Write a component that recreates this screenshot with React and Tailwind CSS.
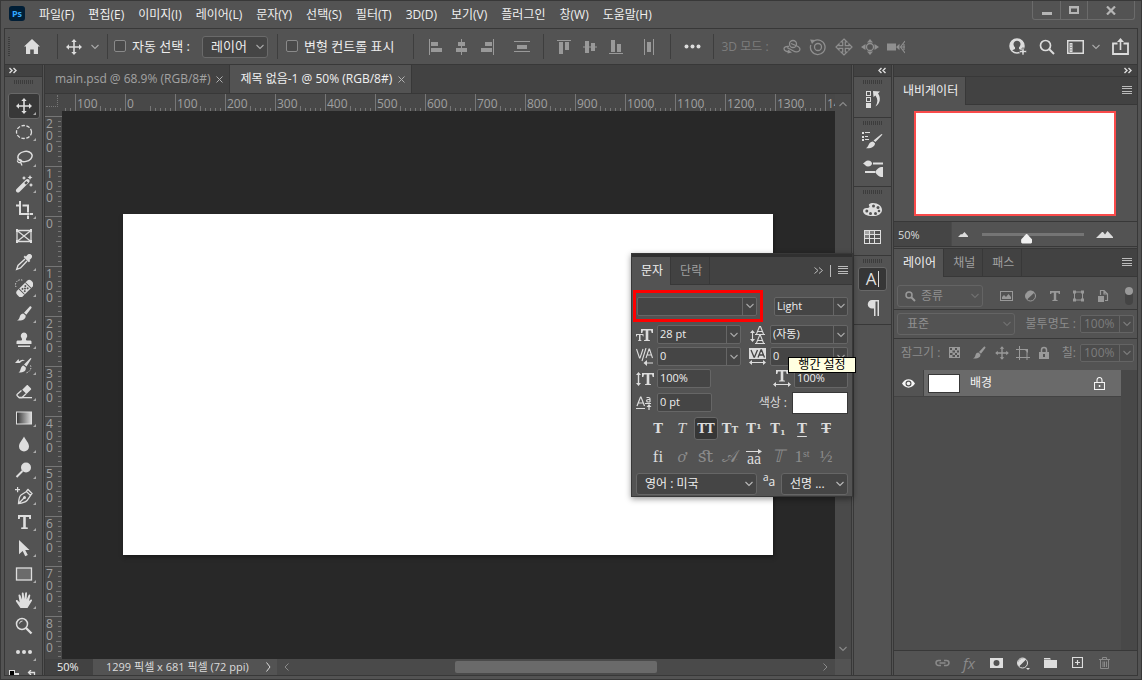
import React, { useState } from "react";

const menus = ["파일(F)", "편집(E)", "이미지(I)", "레이어(L)", "문자(Y)", "선택(S)", "필터(T)", "3D(D)", "보기(V)", "플러그인", "창(W)", "도움말(H)"];

const hRuler = ["100", "0", "100", "200", "300", "400", "500", "600", "700", "800", "900", "1000", "1100", "1200", "1300", "1400"];
const vRuler = ["200", "100", "0", "100", "200", "300", "400", "500", "600", "700", "800"];

const Svg = ({ w = 18, h = 18, children, className = "" }) => (
  <svg width={w} height={h} viewBox={`0 0 ${w} ${h}`} fill="currentColor" className={`shrink-0 ${className}`} aria-hidden="true">
    {children}
  </svg>
);

const Line = ({ d, sw = 1, ...rest }) => (
  <path d={d} fill="none" stroke="currentColor" strokeWidth={sw} {...rest} />
);

const Chevron = ({ className = "" }) => (
  <Svg w={8} h={6} className={className}>
    <Line d="M0.5 1l3.500 3.500L7.500 1" sw={1.100} />
  </Svg>
);

const DoubleArrow = ({ left }) => (
  <Svg w={8} h={7}>
    {left ? <Line d="M3.500 1L1 3.500 3.500 6M7.500 1L5 3.500 7.500 6" sw={1.400} /> : <Line d="M.5 1L3 3.500.5 6M4.500 1L7 3.500 4.500 6" sw={1.400} />}
  </Svg>
);

const MenuLines = () => (
  <Svg w={10} h={9}>
    <path d="M0 0h10v1H0zM0 2h10v1H0zM0 5h10v1H0zM0 7h10v1H0z" />
  </Svg>
);

const Grip = ({ className = "" }) => (
  <div className={`h-1 w-5 bg-[repeating-linear-gradient(90deg,#3c3c3c_0_1px,transparent_1px_2px)] ${className}`} />
);

const MoveIcon = () => (
  <Svg>
    <path d="M9 1l2.700 3H9.800v4.200H14V6.300l3 2.700-3 2.700V9.800H9.800V14h1.900L9 17l-2.700-3h1.900V9.800H4v1.900L1 9l3-2.700v1.900h4.200V4H6.300z" />
  </Svg>
);

const BrushIcon = () => (
  <Svg>
    <path d="M16 1.500c.8.500.8 1 .3 1.800l-5 6.500-2.300-2 5.500-6c.5-.5 1-.6 1.500-.3zM8.300 8.500l2.300 2c.5 3-2 5.500-8.600 5 2-1 2.300-2.500 3-4.500.6-1.600 1.800-2.400 3.300-2.500z" />
  </Svg>
);

const tools = [
  { name: "이동 도구", icon: <MoveIcon /> },
  { name: "원형 선택 윤곽 도구", icon: <Svg><ellipse cx="9" cy="9" rx="7.500" ry="6.500" fill="none" stroke="currentColor" strokeWidth="1.300" strokeDasharray="3.500 1.500" /></Svg> },
  {
    name: "올가미 도구",
    icon: (
      <Svg>
        <ellipse cx="10" cy="7.500" rx="7.200" ry="5" fill="none" stroke="currentColor" strokeWidth="1.500" transform="rotate(-12 10 7.500)" />
        <Line d="M2.500 11c2-1.500 5 .5 3.500 2-1.500 1.200-4 .3-3.500-1.500M5.500 13l1.500 3.500" sw={1.300} />
      </Svg>
    ),
  },
  {
    name: "자동 선택 도구",
    icon: (
      <Svg>
        <Line d="M3 15.500L12.500 6" sw={4} strokeLinecap="round" />
        <path d="M9.300 8l1.700 1.700L13 7.600 11.400 6z" fill="#535353" />
        <path d="M9 1l.8 1.200L11 3l-1.200.8L9 5l-.8-1.200L7 3l1.200-.8zM15 0l.8 1.700 1.700.8-1.700.8L15 5l-.8-1.700-1.700-.8 1.700-.8zM16 8l.8 1.200 1.200.8-1.200.8L16 12l-.8-1.200L14 10l1.200-.8z" />
      </Svg>
    ),
  },
  { name: "자르기 도구", icon: <Svg><path d="M4 0h2v12h8v2H4V5.500H1V3.500h3zM7.500 3.500H14v8h-2v-6H7.500zM12 14.500h2V18h-2zM14.500 12H18v2h-3.500z" /></Svg> },
  {
    name: "프레임 도구",
    icon: (
      <Svg>
        <Line d="M2 3.500h14v11H2zM2 3.500l14 11M16 3.500l-14 11" sw={1.300} />
        <path d="M1 2h2v3H1zM15 2h2v3h-2zM1 13h2v3H1zM15 13h2v3h-2z" />
      </Svg>
    ),
  },
  {
    name: "스포이드 도구",
    icon: (
      <Svg>
        <path d="M11.500 3c1.300-2 3-2.500 4.500-1.500s1.500 3-.3 4.500l-1.200 1 .8.900-1.500 1.300-5.200-5.200L9.900 2.600l.8.800z" />
        <Line d="M10 6L3 12.500 1.700 16.300 5.500 15 12 8" sw={1.400} />
      </Svg>
    ),
  },
  {
    name: "스팟 복구 브러시 도구",
    icon: (
      <Svg>
        <g transform="rotate(-45 10 9.500)">
          <rect x="0" y="5.500" width="20" height="8" rx="3" />
          <path d="M5 5.500h.9v8H5zM14 5.500h.9v8H14z" fill="#535353" />
          <g fill="#535353"><circle cx="8" cy="8" r="1" /><circle cx="12" cy="8" r="1" /><circle cx="10" cy="9.500" r="1" /><circle cx="8" cy="11.200" r="1" /><circle cx="12" cy="11.200" r="1" /></g>
        </g>
        <path d="M1 8A5 5 0 018 1.500" fill="none" stroke="currentColor" strokeDasharray="1.300 1.300" />
      </Svg>
    ),
  },
  { name: "브러시 도구", icon: <BrushIcon /> },
  { name: "복제 도장 도구", icon: <Svg><path d="M9 1.500a3.300 3.300 0 012.500 5.400c-.8 1-.8 2 .2 2.600H15c1 0 1.500.5 1.500 1.500v2h-15v-2c0-1 .5-1.500 1.500-1.500h3.300c1-.6 1-1.600.2-2.600A3.300 3.300 0 019 1.500zM3 14.500h12V16H3z" /></Svg> },
  {
    name: "작업 내역 브러시 도구",
    icon: (
      <Svg>
        <path d="M16.500 1.500L11.500 9.500 9 7.500 15.500 1zM8.500 8.500l2.300 2c.5 3-1.500 5-7.300 5 1.700-1 1.800-2.500 2.300-4 .4-1.600 1.500-2.800 2.700-3z" />
        <path d="M0 6l3.500-4 .6 2.300C6 2.500 8 2.300 10 3.500 7.500 3.500 6 4.500 5 6z" />
        <path d="M15.500 8.500c1.500 3-1 7-5 7.500" fill="none" stroke="currentColor" strokeDasharray="1.200 1.500" />
      </Svg>
    ),
  },
  {
    name: "지우개 도구",
    icon: (
      <Svg>
        <path d="M11.500 2.500c.6-.6 1-.6 1.600 0l2.700 2.700c.6.600.5 1 0 1.600L11.500 11 7.200 6.800z" />
        <Line d="M6.500 7.500l-4 3.500c-.8.700-.8 1.200 0 2l1.500 1.500h3l4-3.800" sw={1.300} />
        <path d="M4 14h13v1.300H4z" />
      </Svg>
    ),
  },
  {
    name: "그레이디언트 도구",
    icon: (
      <Svg>
        <defs><linearGradient id="toolGradient"><stop offset="0" stopColor="#333" /><stop offset="1" stopColor="#ddd" /></linearGradient></defs>
        <rect x="1.500" y="3" width="15" height="12" fill="url(#toolGradient)" stroke="currentColor" />
      </Svg>
    ),
  },
  { name: "흐림 효과 도구", icon: <Svg><path d="M9 1.500c2 4 5 6.500 5 10a5 5 0 01-10 0c0-3.500 3-6 5-10z" /></Svg> },
  { name: "닷지 도구", icon: <Svg><circle cx="11" cy="6.500" r="5" /><Line d="M7.500 10L1.500 16" sw={2} /></Svg> },
  {
    name: "펜 도구",
    icon: (
      <Svg>
        <Line d="M3.500 16.500c.3-4.500 1-7.500 2.500-8.500l5.500-3.500 4 4L12 13.500c-1.500 1.500-4 2.500-8.500 3zM4 16l5-5M11.500 4L13 2.500l4 4-1.500 1.800" sw={1.300} />
        <circle cx="9.500" cy="10.500" r="1.500" />
        <path d="M2 0h1.200v2H5v1.200H3.200v2H2v-2H0V2h2z" />
      </Svg>
    ),
  },
  { name: "수평 문자 도구", icon: <Svg><path d="M3 2h13v4h-1.800L14 4h-3.200v10.300l2 .3V16H6.200v-1.400l2-.3V4H5l-.2 2H3z" /></Svg> },
  { name: "패스 선택 도구", icon: <Svg><path d="M4 1l10.500 10h-4.300l2.600 5-2.600 1.200L7.700 12 4 15.200z" /></Svg> },
  { name: "사각형 도구", icon: <Svg><rect x="1.500" y="3" width="15" height="12" fill="#6b6b6b" stroke="currentColor" strokeWidth="1.300" /></Svg> },
  {
    name: "손 도구",
    icon: (
      <Svg>
        <path d="M5.500 17L1 10.500c-.6-1.200.8-1.900 1.700-1l2 2L3.500 4.600c-.1-1.300 1.500-1.500 1.900-.3L7 8.500l-.2-6c0-1.300 1.800-1.300 1.900 0L9.300 8l.9-6c.2-1.200 1.900-1 1.800.3L11.700 8.500l1.800-4.300c.5-1.100 2-.6 1.800.6L14 10l1.500-1.200c1-.7 2 .2 1.300 1.200L12.500 17z" />
      </Svg>
    ),
  },
  { name: "돋보기 도구", icon: <Svg><circle cx="7" cy="7" r="5.500" fill="none" stroke="currentColor" strokeWidth="1.500" /><Line d="M4.500 6.500A3 3 0 017.500 4" sw={1} /><Line d="M11 11l5.500 5.500" sw={2.300} /></Svg> },
  { name: "도구 모음 편집", icon: <Svg><circle cx="3" cy="9" r="2" /><circle cx="9" cy="9" r="2" /><circle cx="15" cy="9" r="2" /></Svg> },
];

const Divider = () => <div className="h-[25px] w-px shrink-0 bg-[#3e3e3e]" />;

const IconButton = ({ label, className = "", children }) => (
  <button type="button" aria-label={label} className={`flex shrink-0 items-center justify-center ${className}`}>
    {children}
  </button>
);

const CheckOption = ({ label }) => (
  <label className="flex shrink-0 items-center gap-1.5 text-[13px] text-[#ececec]">
    <input type="checkbox" className="size-3 appearance-none rounded-xs border border-[#8a8a8a] bg-[#4a4a4a]" />
    <span className="whitespace-nowrap">{label}</span>
  </label>
);

const Select = ({ label, value, className = "", textClass = "" }) => (
  <div className={`relative flex items-center rounded-[3px] border ${className}`}>
    <select aria-label={label} className={`h-full w-full appearance-none bg-transparent outline-none ${textClass}`}>
      <option>{value}</option>
    </select>
    <Chevron className="pointer-events-none absolute right-[3px]" />
  </div>
);

/* editable value with its drop-down button */
const Combo = ({ label, value, drop = true, className = "" }) => (
  <div className={`flex h-[19px] items-stretch rounded-xs border border-[#666] bg-[#454545] text-[#eee] ${className}`}>
    <input aria-label={label} defaultValue={value} className="w-0 min-w-0 flex-1 bg-transparent px-0.5 outline-none" />
    {drop && (
      <button type="button" aria-label={`${label} 목록`} className="flex w-[14px] items-center justify-center border-l border-[#666] text-[#aaa]">
        <Chevron />
      </button>
    )}
  </div>
);

const TitleBar = () => (
  <header className="flex h-[27px] shrink-0 items-start">
    <div className="mt-[5px] ml-2 flex h-[15px] w-4 items-center justify-center rounded-[3px] bg-[#001e36] text-[9px] font-bold text-[#31a8ff]">Ps</div>
    <nav className="ml-[14px] flex h-[27px] items-center gap-3.5 text-[#f0f0f0]">
      {menus.map((menu) => (
        <button key={menu} type="button" className="whitespace-nowrap">{menu}</button>
      ))}
    </nav>
    <div className="mr-1.5 ml-auto flex h-[19px] rounded-b-[3px] border border-t-0 border-[#6b6b6b] text-[#b5b5b5]">
      <IconButton label="최소화" className="w-7 border-r border-[#6b6b6b]"><Svg w={10} h={12}><path d="M0 8h10v3H0z" /></Svg></IconButton>
      <IconButton label="최대화" className="w-[27px] border-r border-[#6b6b6b]"><Svg w={10} h={8}><path fillRule="evenodd" d="M0 0h10v8H0zM2 2.500h6v3.500H2z" /></Svg></IconButton>
      <IconButton label="닫기" className="w-[46px]"><Svg w={10} h={9}><Line d="M1 .5l8 8M9 .5l-8 8" sw={2.200} /></Svg></IconButton>
    </div>
  </header>
);

const OptionsBar = () => (
  <div className="flex h-9 shrink-0 items-center border-b border-[#383838] text-[#dcdcdc]">
    <div className="ml-[3px] h-5 w-0.5 shrink-0 bg-[repeating-linear-gradient(180deg,#3c3c3c_0_1px,transparent_1px_2px)]" />
    <IconButton label="홈" className="mr-3 ml-3.5 w-4">
      <Svg w={16} h={15}><path d="M8 0l8 7.500h-2V15H9.800v-4.500H6.200V15H2V7.500H0z" /></Svg>
    </IconButton>
    <div className="ml-[5px]"><Divider /></div>
    <IconButton label="이동 도구" className="ml-[7px] gap-2"><MoveIcon /><Chevron className="text-[#aaa]" /></IconButton>
    <div className="mr-1.5 ml-2"><Divider /></div>
    <CheckOption label="자동 선택 :" />
    <Select label="자동 선택 대상" value="레이어" className="ml-3 h-[22px] w-[66px] shrink-0 border-[#6a6a6a] bg-[#454545] text-[13px] text-[#aaa]" textClass="pl-2 text-[#ececec]" />
    <div className="mr-2 ml-[9px]"><Divider /></div>
    <CheckOption label="변형 컨트롤 표시" />
    <div className="mr-[15px] ml-[18px]"><Divider /></div>
    <div className="flex shrink-0 items-center gap-3 text-[#999]">
      <IconButton label="왼쪽 가장자리 정렬"><Svg w={14} h={16}><path d="M0 0h1v16H0zM2 3h7v4H2zM2 9h11v4H2z" /></Svg></IconButton>
      <IconButton label="수평 중앙 정렬"><Svg w={13} h={16}><path d="M6 0h1v16H6zM3 3h7v4H3zM1 9h11v4H1z" /></Svg></IconButton>
      <IconButton label="오른쪽 가장자리 정렬"><Svg w={14} h={16}><path d="M13 0h1v16h-1zM5 3h7v4H5zM1 9h11v4H1z" /></Svg></IconButton>
      <IconButton label="수직 분포" className="ml-2"><Svg w={16} h={12}><path d="M0 0h16v1H0zM3 4h10v4H3zM0 10h16v1H0z" /></Svg></IconButton>
    </div>
    <div className="mx-[13px]"><Divider /></div>
    <div className="flex shrink-0 items-center gap-3 text-[#999]">
      <IconButton label="위쪽 가장자리 정렬"><Svg w={14} h={14}><path d="M0 0h14v1H0zM2 2h4v12H2zM8 2h4v8H8z" /></Svg></IconButton>
      <IconButton label="수직 가운데 정렬"><Svg w={14} h={14}><path d="M0 6.500h14v1H0zM2 1h4v12H2zM8 3h4v8H8z" /></Svg></IconButton>
      <IconButton label="아래쪽 가장자리 정렬"><Svg w={14} h={14}><path d="M0 13h14v1H0zM2 0h4v12H2zM8 4h4v8H8z" /></Svg></IconButton>
      <IconButton label="수평 분포" className="ml-2"><Svg w={12} h={16}><path d="M1 0h1v16H1zM4 3h4v10H4zM10 0h1v16h-1z" /></Svg></IconButton>
    </div>
    <div className="mr-[13px] ml-[15px]"><Divider /></div>
    <IconButton label="정렬 및 분포"><Svg w={17} h={5}><circle cx="2.500" cy="2.500" r="2" /><circle cx="8.500" cy="2.500" r="2" /><circle cx="14.500" cy="2.500" r="2" /></Svg></IconButton>
    <div className="mr-2 ml-3"><Divider /></div>
    <span className="shrink-0 whitespace-nowrap text-[#7d7d7d]">3D 모드 :</span>
    <div className="ml-3.5 flex shrink-0 items-center gap-2 text-[#8f8f8f]">
      <IconButton label="3D 회전">
        <Svg><Line d="M6 8.500c-3-.5-5 .5-5 2.300C1 13 4 14 7 13.500M8 5.500l6 2.500c2.500 1 3.500 3 2.500 4.500s-4 2-6 .5L4 9.500" sw={1.300} /><circle cx="10" cy="6" r="3.500" fill="none" stroke="currentColor" strokeWidth="1.300" /><path d="M5 11.500l4 3-4.500 1z" /></Svg>
      </IconButton>
      <IconButton label="3D 롤">
        <Svg><circle cx="9" cy="9" r="3.500" fill="none" stroke="currentColor" strokeWidth="1.300" /><Line d="M5 3a7.300 7.300 0 11-3.200 4" sw={1.300} /><path d="M1 1.500l5.500.5L3 6z" /></Svg>
      </IconButton>
      <IconButton label="3D 팬">
        <Svg><Line d="M9 1l3 3h-1.700v3.700H14V6l3 3-3 3v-1.700h-3.700V14H12l-3 3-3-3h1.700v-3.700H4V12L1 9l3-3v1.700h3.700V4H6z" sw={1.200} /></Svg>
      </IconButton>
      <IconButton label="3D 슬라이드">
        <Svg><circle cx="9" cy="9" r="3.500" fill="none" stroke="currentColor" strokeWidth="1.300" /><path d="M9 1l3 3.500H6zM9 17l3-3.500H6zM0 9l4.500-3v6zM18 9l-4.500-3v6z" /></Svg>
      </IconButton>
      <IconButton label="3D 카메라 확대">
        <Svg><path d="M0 5.500h9v7H0zM9 9l3.500-3.300v6.600z" /><Line d="M18 3l-4.500 6 4.500 6M17 6v6M14 9h4" sw={1.100} /></Svg>
      </IconButton>
    </div>
    <div className="mr-2 ml-auto flex shrink-0 items-center gap-3">
      <IconButton label="계정">
        <Svg>
          <path fillRule="evenodd" d="M8 1a7 7 0 015.300 11.500L10 11V9.300c.9-.8 1.500-2 1.500-3.300C11.500 4 10 2.700 8 2.700S4.500 4 4.500 6c0 1.300.6 2.500 1.500 3.300V11l-3.300 1.500A7 7 0 018 1z" />
          <circle cx="8" cy="8" r="7" fill="none" stroke="currentColor" strokeWidth="1.500" />
          <path d="M13 10h2v2.500h2.500v2H15V17h-2v-2.500h-2.500v-2H13z" stroke="#535353" strokeWidth=".6" />
        </Svg>
      </IconButton>
      <IconButton label="검색"><Svg w={16} h={16}><circle cx="6.500" cy="6.500" r="5" fill="none" stroke="currentColor" strokeWidth="1.700" /><Line d="M10 10l5 5" sw={2} /></Svg></IconButton>
      <IconButton label="작업 영역" className="gap-2">
        <Svg w={17} h={14}><Line d="M.75 .75h15.500v12.500H.75z" sw={1.500} /><path d="M2.500 3h3v9h-3z" /><path d="M3.500 4.500h1v1h-1zM3.500 7h1v1h-1zM3.500 9.500h1v1h-1z" fill="#535353" /></Svg>
        <Chevron className="text-[#aaa]" />
      </IconButton>
      <IconButton label="공유"><Svg w={17} h={17}><Line d="M5.500 5.500H1V16h15V5.500h-4.500" sw={1.800} /><path d="M8.500 0L12 4H9.300v8H7.700V4H5z" /></Svg></IconButton>
    </div>
  </div>
);

const Toolbar = () => {
  const [active, setActive] = useState(0);
  return (
    <aside className="flex w-[38px] shrink-0 flex-col overflow-hidden border-r border-[#383838] text-[#dedede]">
      <div className="flex h-3 shrink-0 items-center border-b border-[#383838] bg-[#424242] pl-1"><DoubleArrow /></div>
      <Grip className="mt-[3px] ml-[9px] shrink-0" />
      <div className="mt-[9px] ml-[3px] flex flex-col">
        {tools.map((tool, i) => (
          <button
            key={tool.name}
            type="button"
            aria-label={tool.name}
            onClick={() => setActive(i)}
            className={`relative flex h-[26px] w-8 shrink-0 items-center justify-center rounded-[3px] border ${active === i ? "border-[#686868] bg-[#383838]" : "border-transparent"}`}
          >
            {tool.icon}
            {i !== 5 && i !== 20 && <span className="absolute right-[3px] bottom-[3px] size-[3px] bg-[#aaa] [clip-path:polygon(100%_0,100%_100%,0_100%)]" />}
          </button>
        ))}
      </div>
      <div className="mt-[5px] flex shrink-0 gap-2 pl-1">
        <Svg w={10} h={10}><path d="M0 0h6v6H0z" fill="#ddd" /><path d="M1 1h4v4H1z" fill="#000" /><path d="M6 3h4v6H3V7h3z" /></Svg>
        <Svg w={9} h={10}><Line d="M1.500 2.500h6V8M4 0L1.500 2.500 4 5" sw={1.300} /></Svg>
      </div>
    </aside>
  );
};

const DocTab = ({ title, active }) => (
  <div className={`flex items-center gap-1.5 border-r border-[#383838] pr-1.5 pl-[10px] ${active ? "bg-[#535353] text-[#f0f0f0]" : "text-[#a3a3a3]"}`}>
    <button type="button" className="whitespace-nowrap">{title}</button>
    <button type="button" aria-label={`${title} 닫기`} className="text-[#b0b0b0]">
      <Svg w={7} h={7}><Line d="M.5 .5l6 6M6.500 .5l-6 6" /></Svg>
    </button>
  </div>
);

const HorizontalRuler = () => (
  <div className="flex h-[17px] min-w-0 flex-1 overflow-hidden">
    <div className="h-[3px] w-[13px] shrink-0 self-end bg-[repeating-linear-gradient(270deg,transparent_0_4px,#767676_4px_5px)]" />
    {hRuler.map((n, i) => (
      <div key={i} className="relative w-[50px] shrink-0 border-l border-[#767676] pl-px leading-[19px] text-[#a0a0a0]">
        <div className="absolute right-0 bottom-0 h-[3px] w-[29px] bg-[repeating-linear-gradient(270deg,transparent_0_4px,#767676_4px_5px)]" />
        <div className="absolute right-6 bottom-0 h-[5px] w-px bg-[#767676]" />
        {n}
      </div>
    ))}
  </div>
);

const VerticalRuler = () => (
  <div className="w-[17px] shrink-0 overflow-hidden bg-[#484848] pt-[5px]">
    {vRuler.map((n, i) => (
      <div key={i} className="relative flex h-[50px] flex-col border-t border-[#767676] pt-px pl-px text-[#a0a0a0]">
        <div className="absolute right-px bottom-0 h-[49px] w-[3px] bg-[repeating-linear-gradient(0deg,transparent_0_4px,#767676_4px_5px)]" />
        <div className="absolute right-px bottom-6 h-px w-[5px] bg-[#767676]" />
        {n.split("").map((digit, k) => (
          <span key={k} className="h-3 leading-3">{digit}</span>
        ))}
      </div>
    ))}
  </div>
);

const DocumentArea = () => (
  <main className="ml-px flex min-w-0 flex-1 flex-col border-x border-[#383838]">
    <div className="flex h-[29px] shrink-0 border-b border-[#383838] bg-[#424242]">
      <DocTab title="main.psd @ 68.9% (RGB/8#)" />
      <DocTab title="제목 없음-1 @ 50% (RGB/8#)" active />
    </div>
    <div className="flex min-h-0 flex-1">
      <div className="flex min-w-0 flex-1 flex-col">
        <div className="flex bg-[#484848]">
          <div className="flex w-[17px] shrink-0 items-end justify-end pr-1 pb-1">
            <div className="size-3 border-r border-b border-dotted border-[#767676]" />
          </div>
          <HorizontalRuler />
        </div>
        <div className="flex min-h-0 flex-1">
          <VerticalRuler />
          <div className="flex min-w-0 flex-1 items-center justify-center overflow-hidden bg-[#282828] pr-px pb-px">
            <div className="h-[341px] w-[650px] shrink-0 bg-white shadow-[1px_2px_4px_#1a1a1a]" />
          </div>
        </div>
      </div>
      <div className="flex w-4 shrink-0 flex-col items-center justify-between bg-[#4a4a4a] py-[7px] text-[#8a8a8a]">
        <button type="button" aria-label="위로 스크롤" className="rotate-180"><Chevron /></button>
        <button type="button" aria-label="아래로 스크롤"><Chevron /></button>
      </div>
    </div>
    <div className="flex h-4 shrink-0 bg-[#4a4a4a] text-[11px] leading-4">
      <div className="w-12 bg-[#424242] pl-3 text-[#f0f0f0]">50%</div>
      <div className="flex w-[184px] items-center justify-between bg-[#535353] pr-1.5 pl-[13px] whitespace-nowrap text-[#dcdcdc]">
        1299 픽셀 x 681 픽셀 (72 ppi)
        <Svg w={5} h={10}><Line d="M.5 .5L4 5 .5 9.500" /></Svg>
      </div>
      <div className="flex flex-1 items-center px-[7px] text-[#8a8a8a]">
        <button type="button" aria-label="왼쪽으로 스크롤"><Svg w={5} h={8}><Line d="M4.500 .5L1 4l3.500 3.500" /></Svg></button>
        <div className="flex flex-1 justify-center">
          <div className="h-3 w-[38%] rounded-xs bg-[#6a6a6a]" />
        </div>
        <button type="button" aria-label="오른쪽으로 스크롤"><Svg w={5} h={8}><Line d="M.5 .5L4 4 .5 7.500" /></Svg></button>
      </div>
      <div className="w-4 bg-[#535353]" />
    </div>
  </main>
);

const DockGroup = ({ className = "", children }) => (
  <div className={`flex flex-col items-center border-b border-[#383838] pt-[3px] ${className}`}>
    <Grip />
    {children}
  </div>
);

const Dock = () => (
  <aside className="ml-px flex w-[39px] shrink-0 flex-col border-x border-[#383838] text-[#dedede]">
    <div className="flex h-3 shrink-0 items-center justify-end border-b border-[#383838] bg-[#424242] pr-[5px]"><DoubleArrow left /></div>
    <DockGroup className="pb-1">
      <IconButton label="작업 내역" className="h-[29px] w-7">
        <Svg>
          <path fillRule="evenodd" d="M2 1h5v5H2zM3 2v3h3V2zM2 7h5v5H2zM3 8v3h3V8zM2 13h5v5H2z" />
          <path d="M9 1l7 .5-2 2c3 4 2.500 10-2.500 13 2.500-4 2.500-7.500 0-11L9.500 7z" />
        </Svg>
      </IconButton>
    </DockGroup>
    <DockGroup className="pb-1">
      <IconButton label="브러시 설정" className="h-[29px] w-7">
        <Svg w={21} h={18}>
          <path d="M0 1h2v2H0zM3 1h5v1H3zM0 5h2v2H0zM3 5h3v1H3zM0 8h2v2H0zM3 8h4v1H3zM20.500 3.500l-7 7.500-2-1.500L19.500 3zM11 10.500l2 1.700c0 3-3 5.300-9 5 2-1 2-2.500 3-4.200.8-1.500 2.300-2.500 4-2.500z" />
        </Svg>
      </IconButton>
      <IconButton label="브러시" className="h-7 w-7">
        <Svg w={20} h={18}>
          <path d="M0 4.500C2 3 3 1.500 5 1.500c2.500 0 4 1.500 4 3s-1.500 3-4 3S2.500 5.500 0 4.500zM10 3.500h10v2H10zM2 12h10v2H2zM12 13c2-3 4-4.500 6-5h2v10h-2c-2-.5-4-2-6-5z" />
        </Svg>
      </IconButton>
    </DockGroup>
    <DockGroup className="pb-1">
      <IconButton label="색상" className="h-[29px] w-7">
        <Svg w={19} h={18}>
          <path d="M10 3c5 0 9 3 9 7 0 3-3 5.500-7 6H9c-5 0-9-2-9-5 0-2 1.500-3 3.500-3 1.500 0 3-.3 3-1.200C6.500 5.500 5 5 6.500 4c1-.7 2-1 3.500-1z" />
          <g fill="#535353"><circle cx="10.500" cy="6" r="1.500" /><circle cx="15" cy="7.500" r="1.500" /><circle cx="16" cy="11" r="1.300" /><circle cx="12.500" cy="13.500" r="1.500" /><circle cx="7.500" cy="13.500" r="1.500" /><circle cx="3.800" cy="11" r="1.500" /></g>
        </Svg>
      </IconButton>
      <IconButton label="색상 견본" className="h-7 w-7">
        <Svg w={17} h={14}>
          <path fillRule="evenodd" d="M0 0h17v14H0zM1 1v3h4V1zM6 1v3h4V1zM11 1v3h5V1zM1 5v3h4V5zM6 5v3h4V5zM11 5v3h5V5zM1 9v4h4V9zM6 9v4h4V9zM11 9v4h5V9z" />
          <path d="M1 1h4v3H1z" opacity=".6" /><path d="M6 1h4v3H6zM1 5h4v3H1z" opacity=".3" />
        </Svg>
      </IconButton>
    </DockGroup>
    <DockGroup>
      <IconButton label="문자" className="mt-1 h-6 w-[29px] rounded-[3px] border border-[#686868] bg-[#363636]">
        <span className="text-[17px] leading-5">A</span><span className="ml-0.5 h-4 w-px bg-current" />
      </IconButton>
      <IconButton label="단락" className="h-[33px] w-7">
        <Svg w={12} h={16}><path d="M5 0h7v16h-1.500V1.500H8.500V16H7V8.500H5A4.200 4.200 0 015 0z" /></Svg>
      </IconButton>
    </DockGroup>
  </aside>
);

const PanelTab = ({ active, children }) => (
  <button type="button" className={`border-r border-[#383838] pr-[7px] pl-[9px] ${active ? "-mb-px bg-[#535353] pb-px text-[#f0f0f0]" : "text-[#a0a0a0]"}`}>
    {children}
  </button>
);

const PanelTabs = ({ children }) => (
  <div className="flex h-7 shrink-0 border-b border-[#383838] bg-[#424242]">
    {children}
    <button type="button" aria-label="패널 메뉴" className="mr-[5px] ml-auto text-[#bbb]"><MenuLines /></button>
  </div>
);

const Navigator = () => {
  const [zoom, setZoom] = useState(43);
  return (
    <section className="flex flex-col border-b border-[#383838]">
      <PanelTabs><PanelTab active>내비게이터</PanelTab></PanelTabs>
      <div className="flex h-[116px] justify-center pt-1.5 pr-px">
        <div className="h-[105px] w-[202px] border-2 border-[#f94b4b] bg-white" />
      </div>
      <div className="flex h-[25px] items-center border-t border-[#383838] text-[#dcdcdc]">
        <input aria-label="확대/축소 비율" defaultValue="50%" className="h-full w-[58px] border-r border-[#4a4a4a] bg-[#454545] pl-1 text-[11px] outline-none" />
        <Svg w={10} h={5} className="ml-1.5"><path d="M0 5l3-3 1 .5L6.500 0 10 4v1z" /></Svg>
        <input
          type="range"
          aria-label="확대/축소"
          value={zoom}
          onChange={(e) => setZoom(e.target.value)}
          className="mr-3 ml-3.5 h-4 min-w-0 flex-1 appearance-none bg-transparent [&::-webkit-slider-runnable-track]:h-[3px] [&::-webkit-slider-runnable-track]:bg-[#757575] [&::-webkit-slider-thumb]:mt-px [&::-webkit-slider-thumb]:h-[10px] [&::-webkit-slider-thumb]:w-[11px] [&::-webkit-slider-thumb]:appearance-none [&::-webkit-slider-thumb]:bg-[#f0f0f0] [&::-webkit-slider-thumb]:[clip-path:polygon(50%_0,100%_60%,100%_90%,90%_100%,10%_100%,0_90%,0_60%)]"
        />
        <Svg w={17} h={7} className="mr-6"><path d="M0 7l6-6h1l2 2.500L11.500 0l5.500 6v1z" /></Svg>
      </div>
    </section>
  );
};

const PercentField = ({ id, label }) => (
  <>
    <label htmlFor={id} className="ml-auto whitespace-nowrap">{label}</label>
    <div className="ml-1 flex h-[18px] rounded-xs border border-[#646464] bg-[#4c4c4c] text-[#7c7c7c]">
      <input id={id} defaultValue="100%" className="w-[38px] bg-transparent pl-[3px] outline-none" />
      <button type="button" aria-label={`${label} 조절`} className="flex w-[14px] items-center justify-center border-l border-[#646464]"><Chevron /></button>
    </div>
  </>
);

const Layers = () => (
  <section className="mt-px flex min-h-0 flex-1 flex-col border-t border-[#383838]">
    <PanelTabs>
      <PanelTab active>레이어</PanelTab>
      <PanelTab>채널</PanelTab>
      <PanelTab>패스</PanelTab>
    </PanelTabs>
    <div className="flex h-[33px] shrink-0 items-center border-b border-[#383838] px-[3px] pt-1.5 text-[#999]">
      <div className="relative flex items-center">
        <Svg w={11} h={11} className="pointer-events-none absolute left-2"><circle cx="4" cy="4" r="3" fill="none" stroke="currentColor" strokeWidth="1.500" /><Line d="M6 6l4 4" sw={2} /></Svg>
        <Select label="필터 종류" value="종류" className="h-[22px] w-[86px] border-[#646464] text-[#707070]" textClass="pl-[23px] text-[#909090]" />
      </div>
      <div className="ml-[17px] flex items-center gap-[11px]">
        <IconButton label="픽셀 레이어 필터"><Svg w={13} h={12}><path fillRule="evenodd" d="M0 1h13v10H0zM1 2v8h11V2z" /><path d="M2 9V7l2-2 2 2 2.500-3L11 7v2z" /></Svg></IconButton>
        <IconButton label="조정 레이어 필터"><Svg w={13} h={12}><circle cx="6.500" cy="6" r="5" fill="none" stroke="currentColor" /><path d="M10.500 2.500L3 9.500A5 5 0 0110.500 2.500z" /></Svg></IconButton>
        <IconButton label="문자 레이어 필터"><Svg w={13} h={12}><path d="M2 1h10v3h-1.200l-.5-1.300H8.200v7l1.500.5v.8H4.300v-.8l1.500-.5v-7H3.700L3.200 4H2z" /></Svg></IconButton>
        <IconButton label="모양 레이어 필터"><Svg w={13} h={12}><Line d="M2.500 2h8v8h-8z" /><path d="M1 .5h3v3H1zM9 .5h3v3H9zM1 8.500h3v3H1zM9 8.500h3v3H9z" /></Svg></IconButton>
        <IconButton label="고급 개체 필터"><Svg w={13} h={12}><path d="M2 6h6v6H2z" /><Line d="M4.500 5V.5H8L11.500 4v6.500H9M8 .5V4h3.500" sw={1.200} /></Svg></IconButton>
      </div>
      <button type="button" aria-label="필터 켜기" className="mr-px ml-auto flex h-[18px] w-2 justify-center rounded-full bg-[#444]"><span className="size-2 rounded-full bg-[#999]" /></button>
    </div>
    <div className="flex h-[29px] shrink-0 items-center border-b border-[#383838] px-[3px] text-[#8c8c8c]">
      <Select label="혼합 모드" value="표준" className="h-[22px] w-[118px] border-[#646464] text-[#707070]" textClass="pl-[9px] text-[#909090]" />
      <PercentField id="opacity" label="불투명도 :" />
    </div>
    <div className="flex h-[31px] shrink-0 items-center px-[3px] pb-1 text-[#8c8c8c]">
      <span className="ml-1 whitespace-nowrap">잠그기 :</span>
      <div className="ml-2 flex items-center gap-[9px] text-[#9a9a9a]">
        <IconButton label="투명 픽셀 잠그기"><Svg w={13} h={14}><path fillRule="evenodd" d="M1 1h11v11H1zM2 2v2h2V2zM7 2v2h2V2zM4.500 4.500v2H7v-2zM9 4.500v2h2v-2zM2 7v2h2.500V7zM7 7v2h2V7zM4.500 9v2H7V9zM9 9v2h2V9z" /></Svg></IconButton>
        <IconButton label="이미지 픽셀 잠그기" className="-mr-1"><span className="block scale-85"><BrushIcon /></span></IconButton>
        <IconButton label="위치 잠그기" className="-mr-1"><span className="block scale-85"><MoveIcon /></span></IconButton>
        <IconButton label="아트보드 잠그기"><Svg w={14} h={14}><Line d="M3.500 0v14M0 3.500h10l1 1V14M0 11.500h14" /><path d="M8 3l4 4V3z" /></Svg></IconButton>
        <IconButton label="모두 잠그기"><Svg w={10} h={14}><path d="M0 6h10v7H0z" /><Line d="M2.500 6V4a2.500 2.500 0 015 0v2" sw={1.500} /><path d="M4 8h2v3H4z" fill="#535353" /></Svg></IconButton>
      </div>
      <PercentField id="fill" label="칠:" />
    </div>
    <div className="flex min-h-0 flex-1 bg-[#4d4d4d]">
      <div className="flex-1">
        <div className="flex h-[27px] items-stretch border-b border-[#434343] bg-[#6a6a6a] text-[#f4f4f4]">
          <IconButton label="레이어 표시" className="w-[30px] border-r border-[#434343] bg-[#535353]">
            <Svg w={13} h={9}><path fillRule="evenodd" d="M0 4.500C3-1.300 10-1.300 13 4.500 10 10 3 10 0 4.500zM6.500 1.500a3 3 0 100 6 3 3 0 000-6z" /><circle cx="6.500" cy="4.500" r="1.800" /></Svg>
          </IconButton>
          <div className="m-1 h-[19px] w-8 border border-[#383838] bg-white" />
          <button type="button" className="ml-1.5 flex-1 text-left">배경</button>
          <IconButton label="레이어 잠김" className="mr-4"><Svg w={11} h={13}><Line d="M.5 5.500h10v7H.5zM3 5.500V3a2.500 2.500 0 015 0v2.500" sw={1.100} /><path d="M4.800 8h1.500v2H4.800z" /></Svg></IconButton>
        </div>
      </div>
      <div className="w-4 bg-[#484848]" />
    </div>
    <div className="flex h-[25px] shrink-0 items-center justify-end gap-[9px] border-t border-[#383838] pr-6 pb-px text-[#dedede]">
      <IconButton label="레이어 연결" className="w-[18px] text-[#8a8a8a]"><Svg w={15} h={8}><Line d="M6 1.500H3.500a2.500 2.500 0 000 5H6M9 1.500h2.500a2.500 2.500 0 010 5H9M4.500 4h6" sw={1.500} /></Svg></IconButton>
      <IconButton label="레이어 스타일" className="w-[18px] text-[#8a8a8a]"><span className="text-[15px] leading-4 italic">fx</span></IconButton>
      <IconButton label="레이어 마스크 추가" className="w-[18px]"><Svg w={13} h={10}><path fillRule="evenodd" d="M0 0h13v10H0zM6.500 2a3 3 0 100 6 3 3 0 000-6z" /></Svg></IconButton>
      <IconButton label="조정 레이어" className="w-[18px]"><Svg w={14} h={14}><circle cx="6.500" cy="7" r="5" fill="none" stroke="currentColor" /><path d="M10 3.500L3 10.500A5 5 0 0110 3.500zM10 12h4l-2 2z" /></Svg></IconButton>
      <IconButton label="새 그룹" className="w-[18px]"><Svg w={13} h={10}><path d="M0 0h6l1 1.500H0zM0 2h13v8H0z" /></Svg></IconButton>
      <IconButton label="새 레이어" className="w-[18px]"><Svg w={11} h={11}><Line d="M.5 .5h10v10H.5zM5.500 3v5M3 5.500h5" sw={1.200} /></Svg></IconButton>
      <IconButton label="레이어 삭제" className="w-[18px] text-[#8a8a8a]"><Svg w={11} h={12}><Line d="M0 2.500h11M3.500 2V.5h4V2M1.500 3v8.500h8V3M4 4.500V10M5.500 4.500V10M7.500 4.500V10" /></Svg></IconButton>
    </div>
  </section>
);

const styleButtons = [
  { label: "포 굵게", body: <b>T</b> },
  { label: "포 이탤릭", body: <i>T</i> },
  { label: "모두 대문자", body: <b>TT</b>, on: true },
  { label: "작은 대문자", body: <b>T<span className="text-[9px]">T</span></b> },
  { label: "위 첨자", body: <b>T<sup className="text-[8px]">1</sup></b> },
  { label: "아래 첨자", body: <b>T<sub className="text-[8px]">1</sub></b> },
  { label: "밑줄", body: <b className="underline underline-offset-3">T</b> },
  { label: "취소선", body: <b className="line-through">T</b> },
];

const openTypeButtons = [
  { label: "표준 합자", body: "fi", bright: true },
  { label: "문맥 대체", body: <i>ơ</i> },
  { label: "임의 합자", body: "ﬆ" },
  { label: "스와시", body: <span>𝒜</span> },
  {
    label: "스타일 대체",
    body: (
      <span className="flex flex-col items-center">
        <Svg w={16} h={5}><path d="M0 2h12V0l4 2.500L12 5V3H0z" /></Svg>
        <span className="text-[16px] leading-[10px]">aa</span>
      </span>
    ),
    bright: true,
  },
  { label: "제목 대체", body: <i>𝕋</i> },
  { label: "서수", body: <span>1<sup className="text-[10px]">st</sup></span> },
  { label: "분수", body: "½" },
];

const CharIcon = ({ className = "", children }) => (
  <div className={`flex w-[18px] shrink-0 justify-center text-[#dcdcdc] ${className}`}>{children}</div>
);

const CharacterPanel = () => (
  <div className="absolute top-[252px] right-[288px] w-[222px] border border-[#383838] bg-[#535353] shadow-[0_2px_6px_rgba(0,0,0,0.4)]">
    <div className="h-[3px] bg-[#303030]" />
    <div className="flex h-7 border-b border-[#383838] bg-[#424242]">
      <PanelTab active>문자</PanelTab>
      <PanelTab>단락</PanelTab>
      <div className="ml-auto flex items-center gap-[7px] pr-1 text-[#bbb]">
        <button type="button" aria-label="패널 축소"><Svg w={9} h={7}><Line d="M.5 .5l3.500 3-3.500 3M5 .5l3.500 3-3.500 3" /></Svg></button>
        <span className="h-3 w-px bg-current" />
        <button type="button" aria-label="패널 메뉴"><MenuLines /></button>
      </div>
    </div>
    <div className="flex flex-col gap-[3px] px-1 pt-[5px] pb-px text-[11px]">
      <div className="flex items-center justify-between">
        <div className="-ml-[3px] border-[3px] border-[#fe0000] p-px">
          <div className="flex h-6 w-[122px] items-center"><Combo label="글꼴 모음" value="" className="w-[120px]" /></div>
        </div>
        <Combo label="글꼴 스타일" value="Light" className="w-[74px]" />
      </div>
      <div className="flex h-[19px] items-center gap-[3px]">
        <CharIcon><Svg w={18} h={16}><path d="M5 2h12v4h-1.300L15 3.500h-2.700v9.300l1.700.4v.8H8v-.8l1.700-.4V3.500H7L6.300 6H5zM0 7h7.500v2.500H7L6.300 8H4.500v5l1 .4V14H2v-.6l1-.4V8H1.200L.7 9.500H0z" /></Svg></CharIcon>
        <Combo label="글꼴 크기" value="28 pt" className="w-[84px]" />
        <CharIcon className="ml-[5px]">
          <Svg w={16} h={18}><Line d="M6.500 8l3-7.500h1L13.500 8M8 5.500h4.500M6.500 17l3-7.500h1l3 7.500M8 14.500h4.500M2.500 5v10" sw={1.100} /><path d="M0 7l2.500-3L5 7zM0 13l2.500 3L5 13zM5 8h10v1H5zM5 17h10v1H5z" /></Svg>
        </CharIcon>
        <Combo label="행간" value="(자동)" className="flex-1" />
      </div>
      <div className="flex h-[19px] items-center gap-[3px]">
        <CharIcon><Svg w={18} h={18}><Line d="M.5 1l3 9h.5l3-9M6 13L10 0M10 10l3-9h.5l3 9M11 7h5" sw={1.100} /><path d="M17 15.500h-6V18l-3.500-3L11 12v2.500h6z" /></Svg></CharIcon>
        <Combo label="커닝" value="0" className="w-[84px]" />
        <CharIcon className="ml-[5px]"><Svg w={18} h={17}><path d="M0 0h17v11H0z" /><path d="M2 2l3 7h.5l3-7M9 9.500L12 2h.5l3 7.500M10 7h5" fill="none" stroke="#444" strokeWidth="1.300" /><path d="M0 14.500L3 12v2h11v-2l3 2.500-3 2.500v-2H3v2z" /></Svg></CharIcon>
        <Combo label="자간" value="0" className="flex-1" />
      </div>
      <div className="flex h-[19px] items-center gap-[3px]">
        <CharIcon><Svg w={18} h={16}><path d="M6 2h12v4h-1.300L16 3.500h-2.700v9.300l1.700.4v.8H9v-.8l1.700-.4V3.500H8L7.300 6H6zM2.500 1L5 4H3.200v8H5l-2.500 3L0 12h1.800V4H0z" /></Svg></CharIcon>
        <Combo label="세로 비율" value="100%" drop={false} className="w-[54px]" />
        <CharIcon className="ml-auto"><Svg w={18} h={17}><path d="M3 0h12v4h-1.300L13 1.500h-2.700v8.800l1.700.4v.8H6v-.8l1.700-.4V1.500H5L4.300 4H3zM0 14.500L3 12v2h12v-2l3 2.500-3 2.500v-2H3v2z" /></Svg></CharIcon>
        <Combo label="가로 비율" value="100%" drop={false} className="w-[54px]" />
      </div>
      <div className="flex h-[23px] items-center gap-[3px]">
        <CharIcon><Svg w={18} h={16}><Line d="M1 11l3.500-9H5l3.500 9M2.500 8H7M10.500 2.500h2c1 0 1.500.5 1.500 1.300V7M14 4.500h-2c-1.800 0-1.800 2.500 0 2.500H14" sw={1.200} /><path d="M0 13h9v1H0zM13 9l2.500 3H13.600v3h-1.200v-3h-1.900zM9 8h6v1H9z" /></Svg></CharIcon>
        <Combo label="기준선 이동" value="0 pt" drop={false} className="w-[55px]" />
        <span className="ml-auto text-xs text-[#dcdcdc]">색상 :</span>
        <button type="button" aria-label="색상" className="ml-0.5 h-[22px] w-14 border border-[#383838] bg-white" />
      </div>
      <div className="flex justify-center font-['DejaVu_Serif','Liberation_Serif',serif] text-[13px]">
        {styleButtons.map((b) => (
          <button
            key={b.label}
            type="button"
            aria-label={b.label}
            className={`flex h-[23px] w-6 items-center justify-center leading-none text-[#dcdcdc] ${b.on ? "rounded-[3px] border border-[#686868] bg-[#363636] text-xs" : ""}`}
          >
            {b.body}
          </button>
        ))}
      </div>
      <div className="flex justify-center font-['Liberation_Serif','DejaVu_Serif',serif] text-[17px]">
        {openTypeButtons.map((b) => (
          <button
            key={b.label}
            type="button"
            aria-label={b.label}
            className={`flex h-[27px] w-6 items-center justify-center leading-none whitespace-nowrap ${b.bright ? "text-[#dcdcdc]" : "text-[#8c8c8c]"}`}
          >
            {b.body}
          </button>
        ))}
      </div>
      <div className="flex h-[22px] items-center justify-between text-xs text-[#eee]">
        <Select label="언어" value="영어 : 미국" className="h-[22px] w-[121px] border-[#666] bg-[#454545] text-[#bbb]" textClass="pl-2 text-[#eee]" />
        <span className="pb-1 leading-none" aria-hidden="true"><sup className="text-[10px]">a</sup>a</span>
        <Select label="앤티 앨리어스" value="선명 ..." className="h-[22px] w-[67px] border-[#666] bg-[#454545] text-[#bbb]" textClass="pl-2 text-[#eee]" />
      </div>
    </div>
    <div role="tooltip" className="absolute top-[103px] left-[156px] h-4 w-[68px] border border-black bg-[#ffffe1] text-center text-xs leading-[14px] text-black">행간 설정</div>
  </div>
);

const App = () => {
  return (
    <div className="relative flex h-screen w-full flex-col overflow-hidden border border-[#383838] bg-[#535353] font-['Open_Sans','Noto_Sans_CJK_KR',sans-serif] text-xs">
      <TitleBar />
      <div className="mx-[3px] mb-[3px] flex min-h-0 flex-1 flex-col border border-[#383838]">
        <OptionsBar />
        <div className="flex min-h-0 flex-1">
          <Toolbar />
          <DocumentArea />
          <Dock />
          <aside className="ml-px flex w-[244px] shrink-0 flex-col border-l border-[#383838]">
            <div className="flex h-3 shrink-0 items-center justify-end border-b border-[#383838] bg-[#424242] pr-[5px] text-[#dedede]"><DoubleArrow /></div>
            <Navigator />
            <Layers />
          </aside>
        </div>
      </div>
      <CharacterPanel />
    </div>
  );
};

export default App;
